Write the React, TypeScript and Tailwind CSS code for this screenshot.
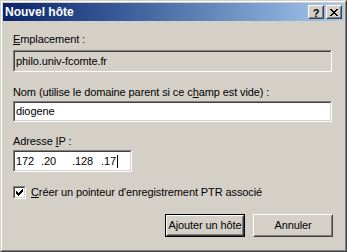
import React from "react";

const font = { fontFamily: '"Liberation Sans", Arial, sans-serif' };

function Sunken({ className = "", children }: { className?: string; children?: React.ReactNode }) {
  return (
    <div className={`border border-t-[#808080] border-l-[#808080] border-b-white border-r-white ${className}`}>
      <div className="h-full w-full border border-t-[#404040] border-l-[#404040] border-b-[#d4d0c8] border-r-[#d4d0c8]">
        {children}
      </div>
    </div>
  );
}

function TitleButton({ children }: { children: React.ReactNode }) {
  return (
    <div className="w-[16px] h-[14px] bg-[#d4d0c8] border border-t-white border-l-white border-b-[#404040] border-r-[#404040]">
      <div className="w-full h-full border border-t-[#d4d0c8] border-l-[#d4d0c8] border-b-[#808080] border-r-[#808080] flex items-center justify-center">
        {children}
      </div>
    </div>
  );
}

export default function App() {
  return (
    <div className="w-[347px] h-[252px] bg-[#d4d0c8] text-[11px] leading-[13px] tracking-[-0.1px] text-black" style={font}>
      <div className="w-full h-full border border-t-[#d4d0c8] border-l-[#d4d0c8] border-b-[#404040] border-r-[#404040]">
        <div className="w-full h-full border border-t-white border-l-white border-b-[#808080] border-r-[#808080] p-px flex flex-col">
          {/* Title bar */}
          <div className="h-[18px] flex items-center bg-gradient-to-r from-[#0a246a] to-[#a6caf0] pl-[2px] pr-[2px]">
            <span className="text-white font-bold text-[12px] leading-[14px] tracking-normal flex-1">Nouvel hôte</span>
            <div className="flex gap-[2px]">
              <TitleButton>
                <span className="font-bold text-[11px] leading-[10px] mt-[1px]">?</span>
              </TitleButton>
              <TitleButton>
                <svg width="8" height="7" viewBox="0 0 8 7" shapeRendering="crispEdges">
                  <path d="M0 0h2v1H0zM6 0h2v1H6zM1 1h2v1H1zM5 1h2v1H5zM2 2h4v1H2zM3 3h2v1H3zM2 4h4v1H2zM1 5h2v1H1zM5 5h2v1H5zM0 6h2v1H0zM6 6h2v1H6z" fill="#000" />
                </svg>
              </TitleButton>
            </div>
          </div>

          {/* Content */}
          <div className="flex flex-col px-[10px]">
            <div className="mt-[12px] h-[13px] whitespace-nowrap">
              <span className="underline underline-offset-[1px]">E</span>mplacement :
            </div>
            <Sunken className="mt-[4px] h-[22px] w-[319px]">
              <div className="h-full flex items-center pl-[1px] text-black">philo.univ-fcomte.fr</div>
            </Sunken>

            <div className="mt-[14px] h-[13px] whitespace-nowrap">
              Nom (utilise le domaine parent si ce c<span className="underline underline-offset-[1px]">h</span>amp est vide) :
            </div>
            <Sunken className="mt-[2px] h-[21px] w-[319px]">
              <div className="h-full bg-white flex items-center pl-[1px]">diogene</div>
            </Sunken>

            <div className="mt-[13px] h-[13px] whitespace-nowrap">
              Adresse <span className="underline underline-offset-[1px]">I</span>P :
            </div>
            <Sunken className="mt-[2px] h-[22px] w-[119px]">
              <div className="h-full bg-white flex items-center pl-[1px]">
                <span className="w-[25px]">172</span>
                <span className="w-[31px]">.20</span>
                <span className="w-[29px]">.128</span>
                <span>.17</span>
                <span className="w-px h-[13px] bg-black ml-px" />
              </div>
            </Sunken>

            <div className="mt-[14px] h-[13px] flex items-center">
              <Sunken className="w-[13px] h-[13px]">
                <div className="w-full h-full bg-white flex items-center justify-center">
                  <svg width="7" height="7" viewBox="0 0 7 7" shapeRendering="crispEdges">
                    <path d="M6 0h1v3H6zM5 1h1v3H5zM4 2h1v3H4zM3 3h1v3H3zM2 4h1v3H2zM1 3h1v3H1zM0 2h1v3H0z" fill="#000" />
                  </svg>
                </div>
              </Sunken>
              <span className="ml-[5px] whitespace-nowrap">
                <span className="underline underline-offset-[1px]">C</span>réer un pointeur d'enregistrement PTR associé
              </span>
            </div>

            <div className="mt-[15px] flex justify-end gap-[8px] pr-[1px]">
              <div className="w-[80px] h-[23px] border border-black">
                <div className="w-full h-full border border-t-white border-l-white border-b-[#404040] border-r-[#404040]">
                  <div className="w-full h-full border border-t-[#d4d0c8] border-l-[#d4d0c8] border-b-[#808080] border-r-[#808080] flex items-center justify-center">
                    <span className="whitespace-nowrap">
                      A<span className="underline underline-offset-[1px]">j</span>outer un hôte
                    </span>
                  </div>
                </div>
              </div>
              <div className="w-[80px] h-[23px] border border-t-white border-l-white border-b-[#404040] border-r-[#404040]">
                <div className="w-full h-full border border-t-[#d4d0c8] border-l-[#d4d0c8] border-b-[#808080] border-r-[#808080] flex items-center justify-center">
                  <span className="whitespace-nowrap">Annuler</span>
                </div>
              </div>
            </div>
          </div>
        </div>
      </div>
    </div>
  );
}
